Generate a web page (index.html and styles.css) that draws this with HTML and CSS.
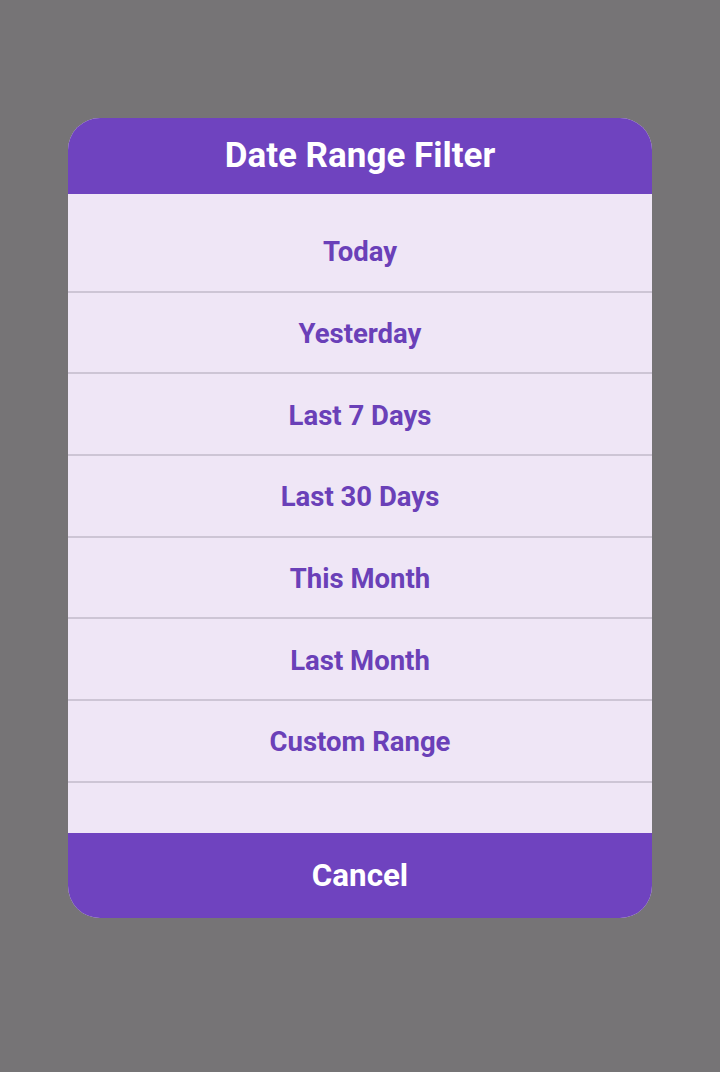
FILE: index.html
```html
<!DOCTYPE html>
<html>
<head>
<meta charset="utf-8">
<link rel="stylesheet" href="styles.css">
</head>
<body>
<div class="screen">
  <div class="dialog">
    <div class="header">Date Range Filter</div>
    <div class="list">
      <div class="item">Today</div>
      <div class="item">Yesterday</div>
      <div class="item">Last 7 Days</div>
      <div class="item">Last 30 Days</div>
      <div class="item">This Month</div>
      <div class="item">Last Month</div>
      <div class="item">Custom Range</div>
    </div>
    <div class="footer">Cancel</div>
  </div>
</div>
</body>
</html>
```
FILE: styles.css
```css
html, body {
  margin: 0;
  padding: 0;
}
body {
  background: #767476;
  font-family: Roboto, "Liberation Sans", sans-serif;
}
.screen {
  width: 720px;
  height: 1072px;
  display: flex;
  justify-content: center;
  padding-top: 118px;
  box-sizing: border-box;
}
.dialog {
  width: 584px;
  height: 800px;
  border-radius: 32px;
  overflow: hidden;
  background: #efe6f6;
  display: flex;
  flex-direction: column;
}
.header {
  height: 76px;
  background: #6f43bf;
  color: #ffffff;
  font-weight: 700;
  font-size: 35px;
  display: flex;
  align-items: center;
  justify-content: center;
  box-sizing: border-box;
  padding-bottom: 2px;
}
.list {
  flex: 1;
  padding-top: 17px;
  display: flex;
  flex-direction: column;
}
.item {
  height: 81.67px;
  box-sizing: border-box;
  border-bottom: 2px solid #cdc5d5;
  display: flex;
  align-items: center;
  justify-content: center;
  color: #6a40b8;
  font-weight: 700;
  font-size: 27.5px;
  padding-top: 2px;
}
.footer {
  height: 85px;
  background: #6f43bf;
  color: #ffffff;
  font-weight: 700;
  font-size: 31.3px;
  display: flex;
  align-items: center;
  justify-content: center;
}
```
